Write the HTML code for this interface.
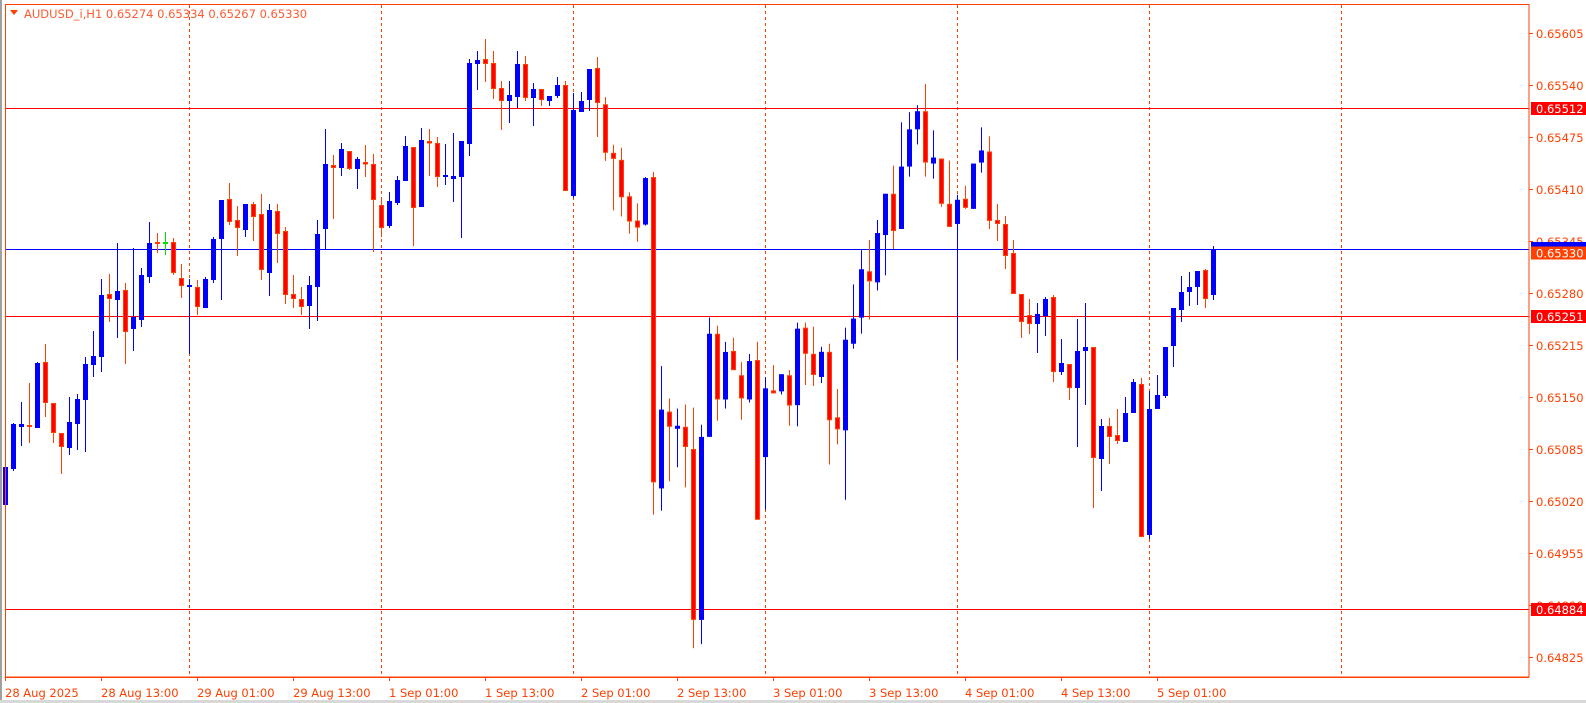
<!DOCTYPE html>
<html><head><meta charset="utf-8">
<style>
html,body{margin:0;padding:0;background:#fff;}
body{width:1586px;height:703px;overflow:hidden;position:relative;font-family:"DejaVu Sans","Liberation Sans",sans-serif;}
svg{position:absolute;left:0;top:0;}
</style></head>
<body>
<svg id="c" width="1586" height="703" xmlns="http://www.w3.org/2000/svg" font-family="DejaVu Sans, Liberation Sans, sans-serif">
<rect x="0" y="0" width="2" height="703" fill="#a0a0a0"/>
<rect x="0" y="700" width="1586" height="3" fill="#d8d8d8"/>
<g id="grid"></g>
<line x1="5" y1="108.5" x2="1529" y2="108.5" stroke="#ff0000" stroke-width="1"/>
<line x1="5" y1="316.5" x2="1529" y2="316.5" stroke="#ff0000" stroke-width="1"/>
<line x1="5" y1="609.5" x2="1529" y2="609.5" stroke="#ff0000" stroke-width="1"/>
<line x1="5" y1="249.5" x2="1529" y2="249.5" stroke="#0000ff" stroke-width="1"/>
<g id="candles"></g>
<rect x="5.5" y="4.5" width="1523.5" height="672.5" fill="none" stroke="#ff4000" stroke-width="1"/>
<g id="axis" fill="#ff4000" font-size="11.5"></g>
<path d="M10 10 L18 10 L14 15 Z" fill="#ff4000"/>
<text x="24" y="18" fill="#ff5a30" font-size="11.5">AUDUSD_i,H1  0.65274 0.65334 0.65267 0.65330</text>
</svg>
<script>
var NS="http://www.w3.org/2000/svg";
function el(p,t,a,txt){var e=document.createElementNS(NS,t);for(var k in a)e.setAttribute(k,a[k]);if(txt!==undefined)e.textContent=txt;p.appendChild(e);return e;}
var grid=document.getElementById('grid');
for(var x=189;x<1529;x+=192){el(grid,'line',{x1:x+.5,y1:5,x2:x+.5,y2:677,stroke:'#ff4000','stroke-width':1,'stroke-dasharray':'3,3'});}
var D=[
['b',467,505,461,507],['b',424,469,423,471],['b',424,427,402,446],['o',426,426,383,443],['b',363,428,362,428],
['r',362,403,344,417],['r',403,433,403,443],['r',433,447,433,474],['b',422,448,397,455],['b',399,424,394,450],
['b',364,400,357,452],['b',356,365,331,377],['b',295,357,279,372],['r',294,299,274,322],['b',291,300,243,338],
['r',290,332,283,364],['b',317,329,248,351],['b',275,320,268,327],['b',243,277,222,283],['o',243,243,233,253],
['g',243,243,232,255],['r',242,273,238,275],['r',278,286,264,298],['b',285,287,279,354],['r',287,307,280,315],
['b',279,308,277,308],['b',239,280,237,283],['b',200,239,200,300],['r',199,222,183,225],['r',220,228,206,256],
['b',204,230,204,237],['r',204,217,202,241],['r',214,270,194,280],['b',210,273,204,296],['r',211,234,204,263],
['r',231,295,227,304],['r',294,299,275,308],['r',299,307,287,315],['b',285,306,276,329],['b',234,287,220,321],
['b',164,229,129,249],['r',165,168,155,219],['b',149,168,143,176],['r',151,169,151,170],['b',159,169,157,189],
['r',162,164,145,177],['r',164,200,154,252],['r',205,228,200,237],['b',201,226,192,228],['b',180,203,176,205],
['b',146,181,136,181],['r',147,208,147,246],['b',140,207,128,207],['r',141,142,129,176],['r',143,177,137,187],
['b',175,177,144,185],['b',176,179,133,202],['b',141,177,141,238],['b',63,144,59,156],['b',60,64,51,90],
['r',59,64,39,82],['r',63,89,51,99],['r',88,101,81,130],['b',95,101,81,123],['b',64,97,51,108],
['r',64,98,56,101],['b',89,98,83,126],['r',89,100,89,106],['b',96,101,96,106],['b',85,96,77,98],
['r',85,191,81,191],['b',110,196,93,198],['b',101,112,92,112],['b',69,100,69,111],['r',68,103,57,137],
['r',104,152,97,160],['r',152,158,144,209],['r',159,196,147,215],['r',195,220,191,232],['r',219,226,202,240],
['b',177,223,176,224],['r',176,478,171,510],['b',406,484,363,506],['r',408,423,395,477],['b',422,425,405,463],
['r',423,443,401,483],['r',445,614,404,642],['b',433,614,421,638],['b',331,433,315,433],['r',331,396,323,417],
['b',349,396,339,405],['r',348,367,335,367],['r',372,395,359,416],['b',358,396,351,399],['r',357,515,339,515],
['b',385,453,374,505],['r',387,390,362,390],['b',371,388,371,391],['r',372,402,367,422],
['b',325,401,319,422],['r',324,350,319,381],['r',350,371,323,382],['b',348,373,343,379],['r',348,416,340,460],
['r',413,425,385,440],['b',336,426,324,495],['b',315,340,281,345],['b',266,314,247,330],['r',268,278,237,316],
['b',230,279,217,287],['b',191,232,191,272],['r',191,228,163,246],['b',164,226,120,226],['b',127,164,110,174],
['b',109,127,103,142],['r',109,160,82,174],['b',155,161,128,176],['r',156,201,156,204],['r',201,224,158,224],
['b',197,221,192,356],['r',196,205,183,206],['b',161,206,161,206],['b',148,160,125,170],['r',149,218,134,226],
['r',220,224,204,241],['r',224,256,216,269],['r',253,294,240,294],['r',294,322,294,338],['r',315,324,299,334],
['b',314,324,303,353],['b',299,316,297,336],['r',297,372,295,382],['b',363,372,339,375],['r',364,388,364,400],
['b',351,388,319,447],['b',347,351,303,405],['r',347,458,347,508],['b',426,459,419,491],['r',426,437,418,464],
['r',435,441,409,444],['b',413,442,397,442],['b',382,413,379,413],['r',384,537,378,537],['b',409,535,391,539],
['b',395,409,375,409],['b',347,396,347,398],['b',308,346,308,367],['b',292,310,276,322],['b',287,292,272,306],
['b',271,287,271,305],['r',270,299,269,308],['b',249,295,246,300]
];
var cg=document.getElementById('candles');
D.forEach(function(d,i){
  var t=d[0],bt=d[1],bb=d[2],wt=d[3],wb=d[4];
  function f(y){ if(i>=75&&i<=98) return 80+(y-80)*1.011; if(i>=99&&i<=123) return 80+(y-78)*1.0067; return y;}
  bt=f(bt);bb=f(bb);wt=f(wt);wb=f(wb);
  var cx=5.5+8*i;
  var wc=t==='b'?'#0000ff':(t==='g'?'#00dd00':'#ff4000');
  el(cg,'rect',{x:cx-0.5,y:wt,width:1,height:Math.max(1,wb-wt),fill:wc});
  if(t==='b'){el(cg,'rect',{x:cx-2.5,y:bt,width:5,height:Math.max(2,bb-bt),fill:'#0000ff'});}
  else if(t==='r'){el(cg,'rect',{x:cx-2,y:bt+0.5,width:4,height:Math.max(1.5,bb-bt-1),fill:'#ff0000',stroke:'#ff4000','stroke-width':1});}
  else {el(cg,'rect',{x:cx-2.5,y:bt-1,width:5,height:2,fill:wc});}
});
var ax=document.getElementById('axis');
el(ax,'line',{x1:5,y1:677.5,x2:1529,y2:677.5,stroke:'#ff4000','stroke-width':1});
var dates=['28 Aug 2025','28 Aug 13:00','29 Aug 01:00','29 Aug 13:00','1 Sep 01:00','1 Sep 13:00','2 Sep 01:00','2 Sep 13:00','3 Sep 01:00','3 Sep 13:00','4 Sep 01:00','4 Sep 13:00','5 Sep 01:00'];
dates.forEach(function(s,k){var x=5+96*k;el(ax,'line',{x1:x+.5,y1:677,x2:x+.5,y2:681,stroke:'#ff4000'});el(ax,'text',{x:x,y:697},s);});
for(var k=0;k<=12;k++){var p=(0.65605-0.00065*k).toFixed(5);var y=33.5+52*k;
  el(ax,'line',{x1:1529,y1:y,x2:1533,y2:y,stroke:'#ff4000'});el(ax,'text',{x:1536,y:y+4.5},p);}
function box(y,txt,col){el(ax,'rect',{x:1531,y:y-6.5,width:55,height:13,fill:col});el(ax,'text',{x:1536,y:y+4.5,fill:'#fff'},txt);}
box(108.5,'0.65512','#ff0000');
el(ax,'rect',{x:1531,y:242,width:55,height:5,fill:'#0000ff'});
box(253,'0.65330','#ff4000');
box(316.5,'0.65251','#ff0000');
box(609.5,'0.64884','#ff0000');
</script>
</body></html>
